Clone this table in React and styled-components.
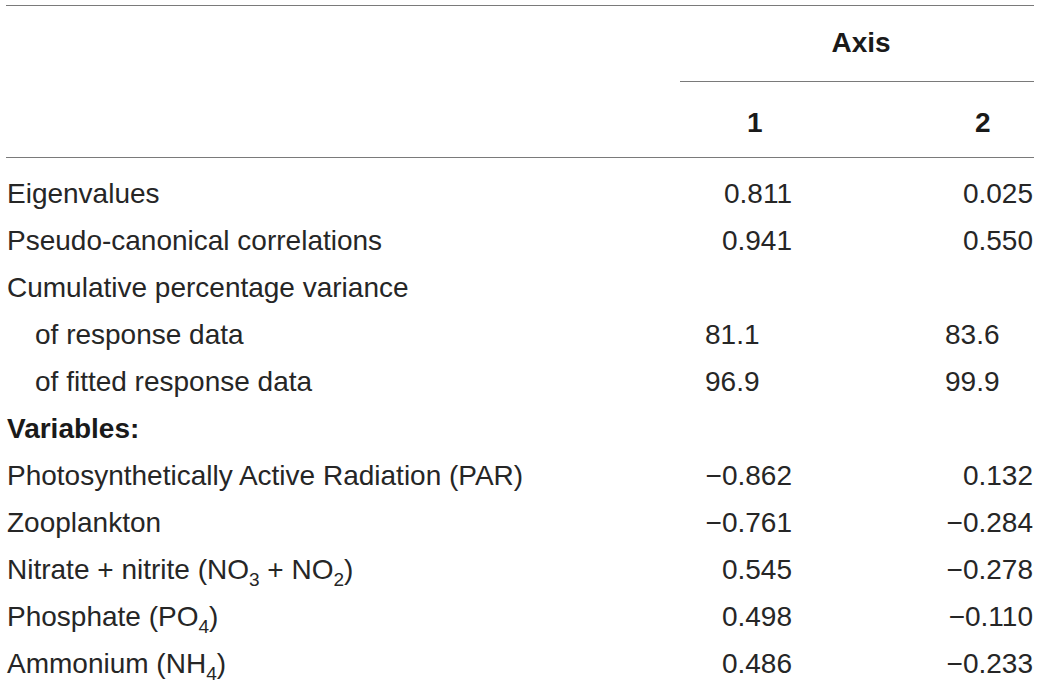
import React from "react";
import styled, { createGlobalStyle } from "styled-components";

const GlobalStyle = createGlobalStyle`
  body {
    margin: 0;
    background: #ffffff;
    color: #262626;
    font-family: "Liberation Sans", Arial, sans-serif;
  }
`;

const rows = [
  { label: "Eigenvalues", a: "0.811", b: "0.025" },
  { label: "Pseudo-canonical correlations", a: "0.941", b: "0.550" },
  { label: "Cumulative percentage variance" },
  { label: "of response data", a: "81.1", b: "83.6", indent: true, left: true },
  { label: "of fitted response data", a: "96.9", b: "99.9", indent: true, left: true },
  { label: "Variables:", bold: true },
  { label: "Photosynthetically Active Radiation (PAR)", a: "\u22120.862", b: "0.132" },
  { label: "Zooplankton", a: "\u22120.761", b: "\u22120.284" },
  {
    label: (
      <>
        Nitrate + nitrite (NO<Sub>3</Sub> + NO<Sub>2</Sub>)
      </>
    ),
    a: "0.545",
    b: "\u22120.278",
  },
  {
    label: (
      <>
        Phosphate (PO<Sub>4</Sub>)
      </>
    ),
    a: "0.498",
    b: "\u22120.110",
  },
  {
    label: (
      <>
        Ammonium (NH<Sub>4</Sub>)
      </>
    ),
    a: "0.486",
    b: "\u22120.233",
  },
];

const App = () => {
  return (
    <>
      <GlobalStyle />
      <Table>
        <Blank />
        <AxisHead>Axis</AxisHead>
        <BlankLow />
        <ColHead $pad={67}>1</ColHead>
        <ColHead $pad={52}>2</ColHead>

        {rows.map((row, i) => (
          <React.Fragment key={i}>
            <Label $indent={row.indent} $bold={row.bold} $first={i === 0}>
              {row.label}
            </Label>
            <Value $col={1} $left={row.left} $first={i === 0}>
              {row.a}
            </Value>
            <Value $col={2} $left={row.left} $first={i === 0}>
              {row.b}
            </Value>
          </React.Fragment>
        ))}
      </Table>
    </>
  );
};

export default App;

function Sub({ children }) {
  return <SubText>{children}</SubText>;
}

const Table = styled.div`
  display: grid;
  grid-template-columns: 674px 243px 111px;
  margin: 5px 6px 0 6px;
  border-top: 1.5px solid #7a7a7a;
  font-size: 28px;
`;

const Blank = styled.div`
  height: 76px;
`;

const AxisHead = styled.div`
  grid-column: 2 / span 2;
  display: flex;
  align-items: center;
  justify-content: center;
  padding: 0 0 2px 8px;
  font-weight: bold;
  color: #1a1a1a;
  border-bottom: 1.5px solid #7a7a7a;
`;

const BlankLow = styled.div`
  height: 75px;
  border-bottom: 1.5px solid #7a7a7a;
`;

const ColHead = styled.div`
  display: flex;
  align-items: center;
  padding-left: ${(p) => p.$pad}px;
  padding-top: 6px;
  font-weight: bold;
  color: #1a1a1a;
  border-bottom: 1.5px solid #7a7a7a;
`;

const Label = styled.div`
  height: 47px;
  line-height: 47px;
  white-space: nowrap;
  padding-left: ${(p) => (p.$indent ? 29 : 1)}px;
  font-weight: ${(p) => (p.$bold ? "bold" : "normal")};
  color: ${(p) => (p.$bold ? "#1a1a1a" : "#262626")};
  margin-top: ${(p) => (p.$first ? 12 : 0)}px;
`;

const Value = styled.div`
  height: 47px;
  line-height: 47px;
  white-space: nowrap;
  margin-top: ${(p) => (p.$first ? 12 : 0)}px;
  text-align: ${(p) => (p.$left ? "left" : "right")};
  padding-left: ${(p) => (p.$left ? (p.$col === 1 ? 25 : 22) : 0)}px;
  padding-right: ${(p) => (p.$left ? 0 : p.$col === 1 ? 131 : 1)}px;
`;

const SubText = styled.span`
  font-size: 0.68em;
  line-height: 0;
  vertical-align: -0.35em;
`;
